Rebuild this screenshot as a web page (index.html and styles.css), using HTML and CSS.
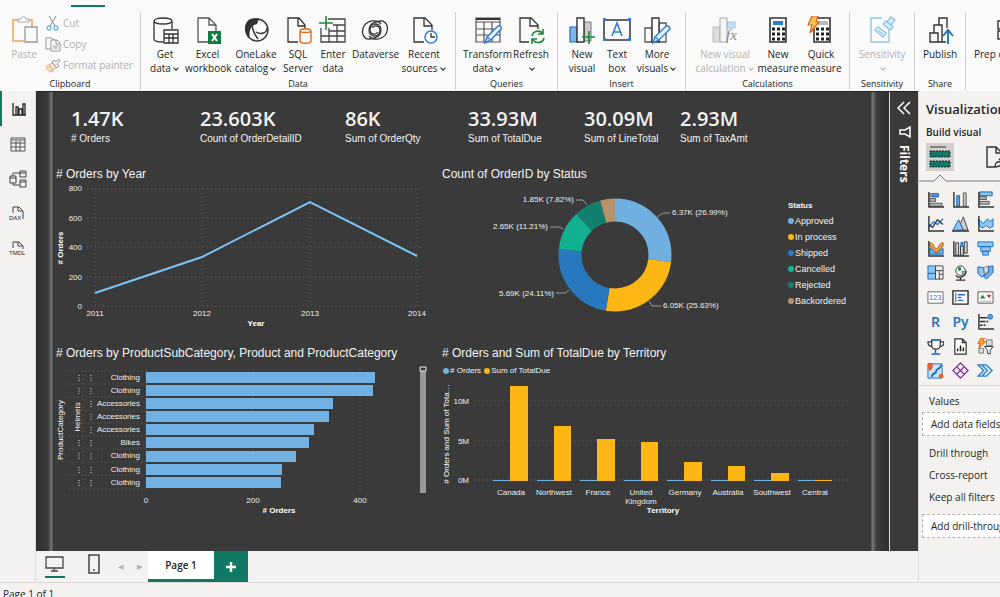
FILE: index.html
```html
<!DOCTYPE html>
<html lang="en">
<head>
    <meta charset="UTF-8">
    <meta name="viewport" content="width=device-width, initial-scale=1.0">
    <title>Orders report</title>
    <link rel="stylesheet" href="styles.css">
</head>
<body>
    <header class="ribbon">
        <div class="tab-strip"><span class="tab-line"></span></div>
        <div class="groups">
            <section class="group clipboard">
                <div class="tools">
                    <button class="tool off">
                        <svg class="icon" viewBox="0 0 28 28"><path d="M10 4H3v21h11" fill="none" stroke="#f0b878" stroke-width="2"/><path d="M18 4h4v7" fill="none" stroke="#f0b878" stroke-width="2"/><path d="M8 6V3h3c0-3 5-3 5 0h3v3z" fill="#fff" stroke="#aaa"/><path d="M15 11h12v15H15z" fill="#fafafa" stroke="#999" stroke-width="1.3"/></svg>
                        Paste
                    </button>
                    <div class="small-tools">
                        <button class="small-tool"><svg viewBox="0 0 16 16"><path d="M4 1l6 10M11 1L5 11" stroke="#888" fill="none"/><g fill="none" stroke="#6fb3e0" stroke-width="1.3"><circle cx="4" cy="13" r="2"/><circle cx="11" cy="13" r="2"/></g></svg>Cut</button>
                        <button class="small-tool"><svg viewBox="0 0 16 16"><path d="M6 13H1V2h6l2 2M6 4h6l3 3v8H6zM11 4v4h4M8 10h5M8 12h5" fill="none" stroke="#999"/></svg>Copy</button>
                        <button class="small-tool"><svg viewBox="0 0 16 16"><path d="M2 9l5-3 4 4-4 5c-2 0-5-2-6-5z" fill="#fbe3c8" stroke="#eda862"/><path d="M7 5l2-2 2 2 3-3 1 2-3 3 2 2-2 2zM4 11l2-2M6 13l2-2" fill="none" stroke="#999"/></svg>Format painter</button>
                    </div>
                </div>
                <h2>Clipboard</h2>
            </section>
            <section class="group data">
                <div class="tools">
                    <button class="tool">
                        <svg class="icon" viewBox="0 0 28 28"><g fill="none" stroke="#333" stroke-width="1.3"><path d="M12 26c-5 0-9-1-9-3V5c0-4 18-4 18 0v8M3 5c0 4 18 4 18 0"/><path d="M13 14h14v13H13zM13 18h14M13 22h14M18 18v9M22 18v9" fill="#fff"/></g></svg>
                        Get<br>data<i class="caret"></i>
                    </button>
                    <button class="tool">
                        <svg class="icon" viewBox="0 0 28 28"><path d="M14 26H4V2h11l7 7v6M15 2v7h7" fill="none" stroke="#555" stroke-width="1.3"/><path d="M14 15h13v13H14z" fill="#107c41"/><path d="M18 18l5 7M23 18l-5 7" stroke="#fff" stroke-width="2"/></svg>
                        Excel<br>workbook
                    </button>
                    <button class="tool">
                        <svg class="icon" viewBox="0 0 28 28"><path d="M17 3C8 0 3 6 3 12c0 5 2 8 5 10C6 14 10 9 15 8z" fill="#333"/><g fill="none" stroke="#333" stroke-width="1.4"><circle cx="15" cy="14" r="11"/><path d="M10 8c0 7 3 11 6 15M25 12c0 5-6 7-11 4"/></g></svg>
                        OneLake<br>catalog<i class="caret"></i>
                    </button>
                    <button class="tool">
                        <svg class="icon" viewBox="0 0 28 28"><path d="M14 26H4V2h11l6 7v4M14 2v8h7" fill="none" stroke="#333" stroke-width="1.3"/><path d="M16 15c0-3 11-3 11 0v10c0 3-11 3-11 0zM16 15c0 2 11 2 11 0" fill="#fafafa" stroke="#e06a1b" stroke-width="1.4"/></svg>
                        SQL<br>Server
                    </button>
                    <button class="tool">
                        <svg class="icon" viewBox="0 0 28 28"><path d="M9 3h17v23H2V12M14 9h12M10 15h16M2 20h24M10 12v14M18 9v17" fill="none" stroke="#444" stroke-width="1.3"/><path d="M7 0v14M0 7h14" stroke="#1e8a3c" stroke-width="1.6"/></svg>
                        Enter<br>data
                    </button>
                    <button class="tool">
                        <svg class="icon" viewBox="0 0 28 28"><g fill="none" stroke="#333" stroke-width="1.3"><path d="M20 8C16 3 7 4 3 10c-4 8 1 14 6 13 8-1 11-5 11-9 0-8-11-8-11 0 0 5 6 5 8 2"/><path d="M8 20c4 5 13 4 17-2 4-8-1-14-6-13-8 1-11 5-11 9 0 8 11 8 11 0 0-5-6-5-8-2"/></g></svg>
                        Dataverse
                    </button>
                    <button class="tool">
                        <svg class="icon" viewBox="0 0 28 28"><path d="M14 26H4V2h11l7 7v5M14 2v8h8" fill="none" stroke="#333" stroke-width="1.3"/><circle cx="21" cy="21" r="6" fill="#fff" stroke="#2b7cd3" stroke-width="1.5"/><path d="M21 17v4h4" fill="none" stroke="#333" stroke-width="1.3"/></svg>
                        Recent<br>sources<i class="caret"></i>
                    </button>
                </div>
                <h2>Data</h2>
            </section>
            <section class="group queries">
                <div class="tools">
                    <button class="tool">
                        <svg class="icon" viewBox="0 0 28 28"><path d="M2 2h24v24H2zM2 6h24M2 13h24M2 19h24M10 6v20M18 6v20" fill="none" stroke="#555" stroke-width="1.2"/><path d="M2 3h24" stroke="#333" stroke-width="2"/><path d="M11 27l2-6 11-11c2-1 4 1 3 3L17 24zM13 21l4 3" fill="#e4f1fc" stroke="#2b7cd3" stroke-width="1.4"/></svg>
                        Transform<br>data<i class="caret"></i>
                    </button>
                    <button class="tool">
                        <svg class="icon" viewBox="0 0 28 28"><path d="M12 26H3V2h11l7 7v4M13 2v8h8" fill="none" stroke="#333" stroke-width="1.3"/><path d="M15 20c1-5 8-7 11-2M26 13v5h-5M27 22c-1 5-8 6-11 2M15 28v-5h5" fill="none" stroke="#1e8a3c" stroke-width="1.6"/></svg>
                        Refresh<br><i class="caret"></i>
                    </button>
                </div>
                <h2>Queries</h2>
            </section>
            <section class="group insert">
                <div class="tools">
                    <button class="tool">
                        <svg class="icon" viewBox="0 0 28 28"><path d="M16 6h7v19h-7z" fill="#ccc" stroke="#777"/><path d="M2 11h7v15H2z" fill="#7ab8f0" stroke="#2b6cb0" stroke-width="1.2"/><path d="M9 2h7v24H9z" fill="#fff" stroke="#333" stroke-width="1.4"/><path d="M21 15v13M14 21h13" stroke="#1e8a3c" stroke-width="1.7"/></svg>
                        New<br>visual
                    </button>
                    <button class="tool">
                        <svg class="icon" viewBox="0 0 28 28"><path d="M1 4h26v20H1z" fill="none" stroke="#333" stroke-width="1.5"/><path d="M0 2h3v3H0zM25 2h3v3h-3zM0 22h3v3H0zM25 22h3v3h-3z" fill="#2b7cd3"/><path d="M9 20l5-13 5 13M11 16h6" fill="none" stroke="#2b7cd3" stroke-width="1.6"/></svg>
                        Text<br>box
                    </button>
                    <button class="tool">
                        <svg class="icon" viewBox="0 0 28 28"><path d="M2 12h7v14H2zM16 7h7v19h-7z" fill="none" stroke="#555" stroke-width="1.3"/><path d="M9 2h7v24H9z" fill="#fff" stroke="#333" stroke-width="1.4"/><path d="M10 27l2-6 11-11c2-1 4 1 4 3L16 24zM12 21l4 3" fill="#e4f1fc" stroke="#2b7cd3" stroke-width="1.4"/></svg>
                        More<br>visuals<i class="caret"></i>
                    </button>
                </div>
                <h2>Insert</h2>
            </section>
            <section class="group calculations">
                <div class="tools">
                    <button class="tool off">
                        <svg class="icon" viewBox="0 0 28 28"><path d="M16 6h8v6h-8z" fill="#c5dff5" stroke="#9cc7ea"/><path d="M2 11h7v15H2z" fill="#ddd" stroke="#bbb"/><path d="M9 2h7v24H9z" fill="#f5f5f5" stroke="#aaa"/><text x="15" y="24" class="fx">fx</text></svg>
                        New visual<br>calculation<i class="caret"></i>
                    </button>
                    <button class="tool">
                        <svg class="icon" viewBox="0 0 28 28"><path d="M6 2h16v24H6z" fill="#fff" stroke="#333" stroke-width="1.6"/><path d="M9 5h10v4H9z" fill="#2b7cd3"/><path d="M8 13h13M8 18h13M8 23h13" stroke="#222" stroke-width="3" stroke-dasharray="3 2"/></svg>
                        New<br>measure
                    </button>
                    <button class="tool">
                        <svg class="icon" viewBox="0 0 28 28"><path d="M7 2h16v24H7z" fill="#fff" stroke="#333" stroke-width="1.6"/><path d="M11 5h10v4H11z" fill="#bbb"/><path d="M9 13h13M9 18h13M9 23h13" stroke="#222" stroke-width="3" stroke-dasharray="3 2"/><path d="M5 0h6l-2 6h3L3 17l2-8H1z" fill="#f9c557" stroke="#d9601a" stroke-width="1.2"/></svg>
                        Quick<br>measure
                    </button>
                </div>
                <h2>Calculations</h2>
            </section>
            <section class="group sensitivity">
                <div class="tools">
                    <button class="tool off">
                        <svg class="icon" viewBox="0 0 28 28"><g fill="none" stroke="#8ec5e8" stroke-width="1.4"><path d="M14 2H3v24h18V14"/><path d="M7 14l3-3 8 6-3 4zM10 14l5 4"/><path d="M15 8l3-3 7 6-3 3zM19 6l4-5 4 3-4 5" fill="#d7ebf8"/></g></svg>
                        Sensitivity<br><i class="caret"></i>
                    </button>
                </div>
                <h2>Sensitivity</h2>
            </section>
            <section class="group share">
                <div class="tools">
                    <button class="tool">
                        <svg class="icon" viewBox="0 0 28 28"><path d="M4 17h8v9H4zM8 17V9h8v17h-4M13 9V2h8v10M16 26h4" fill="none" stroke="#333" stroke-width="1.4"/><path d="M22 28V15M17 20l5-6 5 6" fill="none" stroke="#1a6fb8" stroke-width="1.8"/></svg>
                        Publish
                    </button>
                </div>
                <h2>Share</h2>
            </section>
            <section class="group prep">
                <div class="tools">
                    <button class="tool">
                        <svg class="icon" viewBox="0 0 28 28"><path d="M1 5h9v8H1zM1 15h9v8H1zM13 5h9v18h-9z" fill="none" stroke="#333" stroke-width="1.4"/><path d="M4 8h4v3H4z" fill="#333"/></svg>
                        Prep data for AI
                    </button>
                </div>
            </section>
        </div>
    </header>

    <div class="workspace">
        <nav class="rail">
            <button class="rail-item active" aria-label="Report view"><svg viewBox="0 0 18 18"><path d="M3 3v12h13M6 15V7h2v8M9 15V9h3v6M13 15V4h2v11" fill="none" stroke="#222" stroke-width="1.3"/></svg></button>
            <button class="rail-item" aria-label="Table view"><svg viewBox="0 0 18 18"><path d="M2 3h14v13H2zM2 8h14M2 12h14M7 6v10M11 6v10M2 5h14" fill="none" stroke="#555"/></svg></button>
            <button class="rail-item" aria-label="Model view"><svg viewBox="0 0 18 18"><path d="M1 6h6v7H1zM11 1h6v6h-6zM11 10h6v7h-6zM1 8h6M11 3h6M11 12h6M4 6V3h7M4 13v2h7" fill="none" stroke="#444"/></svg></button>
            <button class="rail-item" aria-label="DAX query view"><svg viewBox="0 0 18 18"><path d="M4 8V2h6l4 4v8M9 2v4h5" fill="none" stroke="#444"/><text x="0" y="15">DAX</text></svg></button>
            <button class="rail-item" aria-label="TMDL view"><svg viewBox="0 0 18 18"><path d="M4 8V2h6l4 4v3M9 2v4h5" fill="none" stroke="#444"/><text x="0" y="15">TMDL</text></svg></button>
        </nav>

        <div class="center">
            <div class="stage">
                <main class="sheet">
                    <div class="kpis">
                        <div><strong>1.47K</strong><span># Orders</span></div>
                        <div><strong>23.603K</strong><span>Count of OrderDetailID</span></div>
                        <div><strong>86K</strong><span>Sum of OrderQty</span></div>
                        <div><strong>33.93M</strong><span>Sum of TotalDue</span></div>
                        <div><strong>30.09M</strong><span>Sum of LineTotal</span></div>
                        <div><strong>2.93M</strong><span>Sum of TaxAmt</span></div>
                    </div>

                    <div class="charts">
                        <section class="card">
                            <h2># Orders by Year</h2>
                            <svg class="chart" viewBox="0 0 386 148">
                                <path class="grid" d="M33 7h334M33 36h334M33 65h334M33 95h334M33 124h334M41 7v117M148 7v117M256 7v117M363 7v117"/>
                                <path d="M41 111L148 75L256 20L363 74" fill="none" stroke="#7cc4f4" stroke-width="2"/>
                                <g class="end"><text x="28" y="9">800</text><text x="28" y="39">600</text><text x="28" y="68">400</text><text x="28" y="98">200</text><text x="28" y="127">0</text></g>
                                <g class="mid"><text x="41" y="134">2011</text><text x="148" y="134">2012</text><text x="256" y="134">2013</text><text x="363" y="134">2014</text></g>
                                <text class="mid axis" x="202" y="144">Year</text>
                                <text class="mid axis" transform="translate(9 66) rotate(-90)"># Orders</text>
                            </svg>
                        </section>

                        <section class="card">
                            <h2>Count of OrderID by Status</h2>
                            <div class="with-legend">
                                <svg class="chart" viewBox="0 0 345 148">
                                    <g transform="translate(175 73) rotate(-90)" fill="none" stroke-width="23">
                                        <circle r="45" pathLength="10000" stroke="#70b0e0" stroke-dasharray="2699 7301"/>
                                        <circle r="45" pathLength="10000" stroke="#fdb714" stroke-dasharray="2563 7437" stroke-dashoffset="-2699"/>
                                        <circle r="45" pathLength="10000" stroke="#2878bd" stroke-dasharray="2411 7589" stroke-dashoffset="-5262"/>
                                        <circle r="45" pathLength="10000" stroke="#10b090" stroke-dasharray="1121 8879" stroke-dashoffset="-7673"/>
                                        <circle r="45" pathLength="10000" stroke="#128070" stroke-dasharray="782 9218" stroke-dashoffset="-8794"/>
                                        <circle r="45" pathLength="10000" stroke="#b5936b" stroke-dasharray="424 9576" stroke-dashoffset="-9576"/>
                                    </g>
                                    <path d="M217 35l6-4h7M209 119l3 5h9M116 111h9l4-3M110 45h9l4 2M136 18h7l4 5" fill="none" stroke="#999"/>
                                    <text x="232" y="33">6.37K (26.99%)</text>
                                    <text x="223" y="126">6.05K (25.63%)</text>
                                    <g class="end"><text x="114" y="114">5.69K (24.11%)</text><text x="108" y="47">2.65K (11.21%)</text><text x="134" y="20">1.85K (7.82%)</text></g>
                                </svg>
                                <div class="legend">
                                    <h3>Status</h3>
                                    <ul>
                                        <li><i class="dot sky"></i>Approved</li>
                                        <li><i class="dot amber"></i>In process</li>
                                        <li><i class="dot blue"></i>Shipped</li>
                                        <li><i class="dot mint"></i>Cancelled</li>
                                        <li><i class="dot teal"></i>Rejected</li>
                                        <li><i class="dot tan"></i>Backordered</li>
                                    </ul>
                                </div>
                            </div>
                        </section>

                        <section class="card">
                            <h2># Orders by ProductSubCategory, Product and ProductCategory</h2>
                            <svg class="chart" viewBox="0 0 386 160">
                                <path class="grid" d="M15 10h77M15 23h77M15 36h77M15 49h77M15 62h77M15 75h77M15 88h77M15 101h77M15 114h77M15 128h77M199 8v122M306 8v122M29 10v118M92 10v118"/>
                                <path d="M25 14v6M25 27v6M25 79v6M25 92v6M25 106v6M25 119v6M37 14v6M37 27v6M37 40v6M37 53v6M37 66v6M37 79v6M37 92v6M37 106v6M37 119v6" stroke="#ddd" stroke-dasharray="1 1.5"/>
                                <g fill="#70b0e2">
                                    <rect x="92" y="11" width="229" height="11"/><rect x="92" y="24" width="227" height="11"/><rect x="92" y="37" width="187" height="11"/>
                                    <rect x="92" y="50" width="183" height="11"/><rect x="92" y="63" width="168" height="11"/><rect x="92" y="76" width="163" height="11"/>
                                    <rect x="92" y="90" width="150" height="11"/><rect x="92" y="103" width="136" height="11"/><rect x="92" y="116" width="135" height="11"/>
                                </g>
                                <g class="end">
                                    <text x="86" y="19">Clothing</text><text x="86" y="32">Clothing</text><text x="86" y="45">Accessories</text>
                                    <text x="86" y="58">Accessories</text><text x="86" y="71">Accessories</text><text x="86" y="84">Bikes</text>
                                    <text x="86" y="97">Clothing</text><text x="86" y="111">Clothing</text><text x="86" y="124">Clothing</text>
                                </g>
                                <g class="mid"><text x="92" y="142">0</text><text x="199" y="142">200</text><text x="306" y="142">400</text></g>
                                <text class="mid axis" x="225" y="152"># Orders</text>
                                <text class="mid" transform="translate(26 56) rotate(-90)">Helmets</text>
                                <text class="mid axis thin" transform="translate(9 69) rotate(-90)">ProductCategory</text>
                                <rect x="366" y="6" width="6" height="126" fill="#999"/>
                                <path d="M366 6h6v4h-6z" fill="#3a3a3a" stroke="#eee"/>
                            </svg>
                        </section>

                        <section class="card">
                            <h2># Orders and Sum of TotalDue by Territory</h2>
                            <ul class="legend inline">
                                <li><i class="dot sky"></i># Orders</li>
                                <li><i class="dot amber"></i>Sum of TotalDue</li>
                            </ul>
                            <svg class="chart" viewBox="0 0 431 140">
                                <path class="grid" d="M35 20h375M35 60h375M35 99h375"/>
                                <g fill="#fdb714">
                                    <rect x="70" y="5" width="18" height="95"/><rect x="114" y="45" width="17" height="55"/><rect x="157" y="58" width="18" height="42"/><rect x="201" y="61" width="17" height="39"/>
                                    <rect x="244" y="81" width="18" height="19"/><rect x="288" y="85" width="17" height="15"/><rect x="331" y="92" width="18" height="8"/><rect x="375" y="99" width="17" height="1"/>
                                </g>
                                <g fill="#70b0e2">
                                    <rect x="53" y="99" width="17" height="1"/><rect x="97" y="99" width="17" height="1"/><rect x="140" y="99" width="17" height="1"/><rect x="184" y="99" width="17" height="1"/>
                                    <rect x="227" y="99" width="17" height="1"/><rect x="271" y="99" width="17" height="1"/><rect x="314" y="99" width="17" height="1"/><rect x="358" y="99" width="17" height="1"/>
                                </g>
                                <g class="end"><text x="29" y="23">10M</text><text x="29" y="63">5M</text><text x="29" y="102">0M</text></g>
                                <g class="mid">
                                    <text x="71" y="114">Canada</text><text x="114" y="114">Northwest</text><text x="158" y="114">France</text><text x="201" y="114">United</text><text x="201" y="123">Kingdom</text>
                                    <text x="245" y="114">Germany</text><text x="288" y="114">Australia</text><text x="332" y="114">Southwest</text><text x="375" y="114">Central</text>
                                </g>
                                <text class="mid axis" x="223" y="132">Territory</text>
                                <text class="mid axis thin" transform="translate(9 53) rotate(-90)"># Orders and Sum of Tota…</text>
                            </svg>
                        </section>
                    </div>
                </main>
                <aside class="filters">
                    <button aria-label="Expand filters"><svg viewBox="0 0 14 14"><path d="M7 1L1 7l6 6M13 1L7 7l6 6" fill="none" stroke="#fff" stroke-width="1.5"/></svg></button>
                    <svg class="funnel" viewBox="0 0 14 14"><path d="M13 2v10L8 9H3V5h5z" fill="none" stroke="#fff" stroke-width="1.500"/></svg>
                    <h2>Filters</h2>
                </aside>
            </div>
            <footer class="pages">
                <button class="device current" aria-label="Desktop layout"><svg viewBox="0 0 20 20"><path d="M1 3h17v11H1zM9 14v3M6 17h7" fill="none" stroke="#444" stroke-width="1.3"/></svg></button>
                <button class="device" aria-label="Mobile layout"><svg viewBox="0 0 20 20"><path d="M5 1h10v18H5zM9 16h2" fill="none" stroke="#444" stroke-width="1.5"/></svg></button>
                <button class="step" aria-label="Previous page">◀</button>
                <button class="step" aria-label="Next page">▶</button>
                <button class="page-tab">Page 1</button>
                <button class="add-page" aria-label="New page"><svg viewBox="0 0 12 12"><path d="M6 1v10M1 6h10" stroke="#fff" stroke-width="2.4"/></svg></button>
            </footer>
        </div>

        <aside class="viz">
            <h1>Visualizations</h1>
            <h2>Build visual</h2>
            <div class="modes">
                <button class="mode on" aria-label="Build visual"><svg viewBox="0 0 28 28"><path d="M4 4h16" stroke="#333"/><path d="M4 8h20v6H4zM4 18h20v6H4z" fill="#117865" stroke="#222" stroke-dasharray="2 1"/></svg></button>
                <button class="mode" aria-label="Format visual"><svg viewBox="0 0 28 28"><path d="M9 24H1V4h9l6 6v4M10 4v6h6M13 17c3-4 8-4 9-8M9 24c0-4 2-6 5-5s1 5-5 5" fill="none" stroke="#333" stroke-width="1.4"/></svg></button>
            </div>
            <svg class="notch" viewBox="0 0 82 9"><path d="M0 8H15L21 2L27 8H82" fill="none" stroke="#777"/></svg>
            <div class="gallery">
                <button aria-label="Stacked bar"><svg viewBox="0 0 18 18"><path d="M3 3h9v3H3zM3 8h6v3H3zM3 13h13v3H3z" fill="#bbb" stroke="#555"/><path d="M6 3h6v3H6z" fill="#5aa9e6" stroke="#1a5fb4"/><path d="M2 1v16h16" class="ax"/></svg></button>
                <button aria-label="Stacked column"><svg viewBox="0 0 18 18"><path d="M5 5h3v11H5z" fill="#5aa9e6" stroke="#1a5fb4"/><path d="M12 2h3v14h-3z" fill="#ccc" stroke="#555"/><path d="M2 1v16h16" class="ax"/></svg></button>
                <button aria-label="Clustered bar"><svg viewBox="0 0 18 18"><path d="M3 1h13v4H3z" fill="#8cc5f2" stroke="#1a5fb4"/><path d="M3 6h7v3H3zM3 11h10v3H3z" fill="#bbb" stroke="#555"/><path d="M2 1v16h16" class="ax"/></svg></button>
                <button aria-label="Line"><svg viewBox="0 0 18 18"><path d="M2 13l5-6 4 3 6-6" class="bl"/><path d="M2 10l4 3 5-8 6 5" fill="none" stroke="#333" stroke-width="1.3"/><path d="M2 1v16h16" class="ax"/></svg></button>
                <button aria-label="Area"><svg viewBox="0 0 18 18"><path d="M6 16l6-14 5 14z" fill="#ccc" stroke="#444"/><path d="M1 16l6-11 5 11z" fill="#8cc5f2" stroke="#1a5fb4"/><path d="M0 17h18" class="ax"/></svg></button>
                <button aria-label="Stacked area"><svg viewBox="0 0 18 18"><path d="M2 5l5 4 4-5 3 3 3-3v8l-4 2-3-3-4 3-4-3z" fill="#8cc5f2" stroke="#1a6fc4"/><path d="M2 1v16h16" class="ax"/></svg></button>
                <button aria-label="Ribbon"><svg viewBox="0 0 18 18"><path d="M3 3c5 0 4 6 7 6s2-6 7-6v4c-4 0-4 6-7 6S7 7 3 7z" fill="#f4a64a" stroke="#a55a10"/><path d="M3 9c4 0 4 5 7 5s3-5 7-5v6H3z" fill="#6cb3ea" stroke="#1a5fb4"/><path d="M2 1v16h16" class="ax"/></svg></button>
                <button aria-label="Waterfall"><svg viewBox="0 0 18 18"><path d="M4 3h3v13H4zM9 6h3v10H9zM13 2h3v12h-3z" fill="#ddd" stroke="#333"/><path d="M9 2h3v5H9z" fill="#2b7cd3"/><path d="M2 1v16h16" class="ax"/></svg></button>
                <button aria-label="Funnel"><svg viewBox="0 0 18 18"><path d="M1 2h16v5H1zM4 7h10v5H4zM6 12h6v4H6z" fill="#8cc5f2" stroke="#1a6fc4"/></svg></button>
                <button aria-label="Treemap"><svg viewBox="0 0 18 18"><path d="M1 2h8v8H1zM1 10h8v6H1z" fill="#8cc5f2" stroke="#1a6fc4"/><path d="M9 2h8v14H9zM9 7h8M13 7v9M13 11h4" fill="#eee" stroke="#444"/></svg></button>
                <button aria-label="Map"><svg viewBox="0 0 18 18"><circle cx="9" cy="7" r="5" fill="#fff" stroke="#333"/><path d="M6 4l3-1 1 3-3 2zM10 8l3-1-2 4z" fill="#1e8a3c"/><path d="M4 12c3 4 11 2 11-5M9 14v3M4 17h10" fill="none" stroke="#333" stroke-width="1.4"/></svg></button>
                <button aria-label="Filled map"><svg viewBox="0 0 18 18"><path d="M1 3l6 1 1 7-3 3-4-4z" fill="#8cc5f2" stroke="#1a5fb4"/><path d="M7 4l5-2 1 5-5 4z" fill="#ddd" stroke="#777"/><path d="M12 3l5-1v7l-7 7-3-3 5-4z" fill="#6cb3ea" stroke="#1a5fb4"/></svg></button>
                <button aria-label="Card"><svg viewBox="0 0 18 18"><path d="M1 3h16v12H1z" fill="#fff" stroke="#666"/><text x="2" y="12" class="num">123</text></svg></button>
                <button aria-label="Multi-row card"><svg viewBox="0 0 18 18"><path d="M1 2h16v14H1z" fill="#fff" stroke="#222" stroke-width="1.4"/><path d="M4 4v10" stroke="#444"/><path d="M6 6h8M6 9h4M6 12h6" stroke="#2b6cd3" stroke-width="1.5"/></svg></button>
                <button aria-label="KPI"><svg viewBox="0 0 18 18"><path d="M1 3h16v12H1z" fill="#fff" stroke="#555"/><path d="M3 10l3-4 3 4z" fill="#1e8a3c"/><path d="M10 6h5l-2 4z" fill="#d13438"/><path d="M3 13h12" stroke="#aaa"/></svg></button>
                <button class="letters" aria-label="R script">R</button>
                <button class="letters" aria-label="Python script">Py</button>
                <button aria-label="Key influencers"><svg viewBox="0 0 18 18"><path d="M2 1v16h16M3 5h8M3 9h6M3 13h3" class="ax"/><circle cx="14" cy="4" r="2.5" fill="#5aa9e6" stroke="#1a5fb4"/><circle cx="11" cy="9" r="1" fill="#333"/><circle cx="8" cy="13" r="1" fill="#333"/></svg></button>
                <button aria-label="Goals"><svg viewBox="0 0 18 18"><path d="M5 2h9v6c0 5-9 5-9 0zM5 4H1c0 4 2 5 4 5M14 4h4c0 4-2 5-4 5" fill="#fff" stroke="#333" stroke-width="1.3"/><path d="M5 2h9" stroke="#2b7cd3" stroke-width="2"/><path d="M9 12v4M5 17h9" stroke="#1a5fb4" stroke-width="1.5"/></svg></button>
                <button aria-label="Paginated report"><svg viewBox="0 0 18 18"><path d="M3 1h8l4 4v12H3zM11 1v4h4" fill="#fff" stroke="#333" stroke-width="1.3"/><path d="M6 14v-3M9 14V8M12 14v-4" stroke="#222" stroke-width="1.6"/></svg></button>
                <button aria-label="Power Apps"><svg viewBox="0 0 18 18"><path d="M10 2h6v6h-6zM2 11h5v5H2z" fill="#ddd" stroke="#777"/><path d="M4 0h4L6 4h3L2 11l1-5H1z" fill="#f9a13a" stroke="#d9601a"/><path d="M8 9h9l-3 4v4l-3-1v-3z" fill="#fff" stroke="#333"/></svg></button>
                <button aria-label="Azure map"><svg viewBox="0 0 18 18"><path d="M1 2h15v15H1z" fill="#c9e4f8" stroke="#1a6fc4"/><path d="M5 16c0-5 5-3 5-7 0-2 4-1 5-6" fill="none" stroke="#1a6fc4" stroke-width="2"/><path d="M1 1h5v5L3 10 1 6z" fill="#e0622a"/><circle cx="15" cy="15" r="2.5" fill="#e0622a"/></svg></button>
                <button aria-label="Power Apps visual"><svg viewBox="0 0 18 18"><path d="M9 1l8 8-8 8-8-8zM5 5l8 8M13 5l-8 8" fill="#fff" stroke="#8a2da5" stroke-width="1.4"/></svg></button>
                <button aria-label="Power Automate"><svg viewBox="0 0 18 18"><path d="M1 3h9l6 6-6 6H1l6-6zM5 3l6 6-6 6" fill="#d9ecfb" stroke="#2b7cd3" stroke-width="1.4"/></svg></button>
            </div>
            <div class="wells">
                <h3>Values</h3>
                <div class="well">Add data fields here</div>
                <h3>Drill through</h3>
                <p>Cross-report</p>
                <p>Keep all filters</p>
                <div class="well last">Add drill-through fields here</div>
            </div>
        </aside>
    </div>
    <div class="status">Page 1 of 1</div>
</body>
</html>
```
FILE: styles.css
```css
* {
    box-sizing: border-box;
}
body {
    margin: 0;
    height: 100vh;
    display: flex;
    flex-direction: column;
    overflow: hidden;
    font-family: "Open Sans", "Noto Sans", sans-serif;
    font-size: 10px;
    color: #252423;
    background: #f3f2f1;
}
h1, h2, h3, p, ul {
    margin: 0;
    padding: 0;
    list-style: none;
}
button {
    font: inherit;
    color: inherit;
    background: none;
    border: 0;
    padding: 0;
    cursor: pointer;
}
svg {
    display: block;
}

/* Ribbon */
.ribbon {
    flex: none;
    background: #fafafa;
    overflow: hidden;
    padding-bottom: 1px;
}
.tab-strip {
    height: 12px;
    padding: 5px 0 0 71px;
}
.tab-line {
    display: block;
    width: 34px;
    height: 2px;
    background: #117865;
}
.groups {
    display: flex;
    height: 78px;
}
.group {
    flex: none;
    display: flex;
    flex-direction: column;
    justify-content: space-between;
    border-right: 1px solid #d2d0ce;
}
.group h2 {
    font-size: 9px;
    font-weight: 400;
    line-height: 12px;
    text-align: center;
}
.tools {
    display: grid;
    align-items: start;
}
.tool {
    line-height: 14px;
    padding-top: 4px;
    white-space: nowrap;
    display: flow-root;
    text-align: center;
}
.icon {
    width: 28px;
    height: 28px;
    margin: 0 auto 3px;
}
.off {
    color: #b3b0ad;
}
.caret {
    display: inline-block;
    width: 4px;
    height: 4px;
    margin: 0 2px 2px 3px;
    border: solid currentColor;
    border-width: 0 1px 1px 0;
    transform: rotate(45deg);
}
.fx {
    font: italic 15px "Liberation Serif", serif;
    fill: #888;
}
.clipboard { width: 141px; }
.clipboard .tools { grid-template-columns: 36px 1fr; padding-left: 6px; }
.data { width: 315px; }
.data .tools { grid-template-columns: 40px 45px 52px 32px 38px 46px 52px; padding-left: 4px; }
.queries { width: 102px; }
.queries .tools { grid-template-columns: 51px 36px; padding-left: 6px; }
.insert { width: 128px; }
.insert .tools { grid-template-columns: 34px 36px 44px; padding-left: 7px; }
.calculations { width: 164px; }
.calculations .tools { grid-template-columns: 62px 44px 42px; padding-left: 8px; }
.sensitivity { width: 65px; }
.share { width: 51px; }
.prep { border: 0; padding-left: 8px; }
.small-tools {
    display: flex;
    flex-direction: column;
    padding-left: 3px;
}
.small-tool {
    display: flex;
    align-items: center;
    gap: 2px;
    height: 21px;
    color: #b3b0ad;
    white-space: nowrap;
}
.small-tool svg {
    width: 16px;
    height: 16px;
}

/* Workspace */
.workspace {
    flex: 1;
    min-height: 0;
    display: flex;
}
.rail {
    flex: 0 0 36px;
    border-right: 1px solid #dddbd9;
}
.rail-item {
    display: grid;
    place-items: center;
    width: 100%;
    height: 35px;
}
.rail-item svg {
    width: 18px;
    height: 18px;
}
.rail-item text {
    font: 6px "Liberation Sans", sans-serif;
    fill: #222;
}
.rail-item.active {
    border-left: 2px solid #117865;
}
.center {
    flex: 1;
    min-width: 0;
    display: flex;
    flex-direction: column;
}
.stage {
    flex: 1;
    min-height: 0;
    display: flex;
    background: #3a3a3a;
    border-top: 1px solid #222;
}
.sheet {
    flex: 1;
    min-width: 0;
    overflow: hidden;
    padding: 0 18px 0 18px;
    background:
        linear-gradient(90deg, #2d2d2d, #3c3c3c 12px, #7a7a7a 16px, transparent 17px) left / 20px 100% no-repeat,
        linear-gradient(270deg, #2d2d2d, #3c3c3c 12px, #7a7a7a 17px, transparent 18px) right / 20px 100% no-repeat,
        #3a3a3a;
    font-family: "Liberation Sans", Arial, sans-serif;
    color: #f3f3f3;
}
.kpis {
    display: grid;
    grid-template-columns: 129fr 145fr 123fr 116fr 96fr 191fr;
    height: 74px;
    padding: 14px 0 0 17px;
    white-space: nowrap;
}
.kpis strong {
    display: block;
    font: 600 20px/26px "Open Sans", "Noto Sans", sans-serif;
}
.kpis span {
    display: block;
    font-size: 10px;
    line-height: 14px;
}
.charts {
    display: grid;
    grid-template-columns: 386fr 431fr;
    row-gap: 15px;
}
.card {
    min-width: 0;
}
.card h2 {
    font-size: 12px;
    font-weight: 400;
    line-height: 16px;
    padding-left: 2px;
    white-space: nowrap;
}
.chart {
    width: 100%;
    height: auto;
}
.chart text {
    font-size: 8px;
    fill: #eee;
}
.chart .axis {
    font-weight: 700;
    fill: #fff;
}
.chart .thin {
    font-weight: 400;
}
.mid { text-anchor: middle; }
.end { text-anchor: end; }
.grid {
    fill: none;
    stroke: #5c5c5c;
    stroke-dasharray: 1 3;
}
.with-legend {
    display: grid;
    grid-template-columns: 345fr 86fr;
}
.legend {
    font-size: 9px;
    line-height: 16px;
    padding: 17px 0 0 3px;
    white-space: nowrap;
}
.legend h3 {
    font-size: 8px;
    line-height: 14px;
}
.legend li {
    display: flex;
    align-items: center;
    gap: 1px;
}
.legend.inline {
    display: flex;
    gap: 3px;
    font-size: 8px;
    padding: 0 0 0 3px;
    line-height: 20px;
}
.dot {
    width: 6px;
    height: 6px;
    border-radius: 50%;
}
.sky { background: #70b0e2; }
.amber { background: #fdb714; }
.blue { background: #2878cd; }
.mint { background: #10b898; }
.teal { background: #128070; }
.tan { background: #b5936b; }

/* Collapsed filter pane */
.filters {
    flex: 0 0 29px;
    border-left: 1px solid #ddd;
    background: #3a3a3a;
    color: #fff;
    display: flex;
    flex-direction: column;
    align-items: center;
    gap: 10px;
    padding-top: 9px;
}
.filters svg {
    width: 14px;
    height: 14px;
}
.filters h2 {
    writing-mode: vertical-rl;
    font-size: 12px;
    line-height: 16px;
    margin-top: -4px;
}

/* Page tabs */
.pages {
    flex: 0 0 31px;
    display: flex;
    align-items: stretch;
    padding-left: 9px;
}
.device {
    width: 20px;
    margin: 0 7px 4px 0;
    border-bottom: 2px solid transparent;
}
.device.current {
    margin-right: 19px;
    border-color: #117865;
}
.device svg {
    width: 20px;
    height: 20px;
}
.step {
    width: 19px;
    font-size: 7px;
    color: #b3b0ad;
}
.page-tab {
    width: 66px;
    margin-left: -1px;
    background: #fff;
    border-bottom: 3px solid #117865;
    font-weight: 600;
}
.add-page {
    width: 34px;
    background: #117865;
}
.add-page svg {
    width: 12px;
    height: 12px;
    margin: 0 auto;
}

/* Visualizations pane */
.viz {
    flex: 0 0 82px;
    overflow: hidden;
    white-space: nowrap;
    border-left: 1px solid #dddbd9;
}
.viz h1 {
    font-size: 13px;
    font-weight: 600;
    line-height: 20px;
    padding: 8px 0 0 7px;
}
.viz h2 {
    font-size: 10px;
    font-weight: 600;
    line-height: 14px;
    padding: 6px 0 4px 7px;
}
.modes {
    display: flex;
    gap: 32px;
    padding-left: 7px;
}
.mode {
    flex: none;
    width: 28px;
    height: 28px;
}
.mode.on {
    background: #d2d0ce;
}
.notch {
    width: 82px;
    height: 9px;
    margin-top: 2px;
}
.gallery {
    display: grid;
    grid-template-columns: repeat(3, 25px);
    grid-auto-rows: 1fr;
    height: 204px;
    padding: 5px 0 2px 4px;
    border-bottom: 1px solid #dddbd9;
}
.gallery button {
    display: grid;
    place-items: center;
}
.gallery svg {
    width: 17px;
    height: 17px;
}
.ax {
    fill: none;
    stroke: #333;
    stroke-width: 1.5;
}
.bl {
    fill: none;
    stroke: #2b7cd3;
    stroke-width: 1.5;
}
.num {
    font: 8px "Liberation Sans", sans-serif;
    fill: #2b7cd3;
}
.gallery .letters {
    font-size: 14px;
    font-weight: 600;
    color: #1a6fb8;
}
.wells {
    padding: 4px 0 0 3px;
}
.wells h3, .wells p {
    font-size: 10px;
    font-weight: 400;
    line-height: 22px;
    padding-left: 7px;
}
.well {
    width: 160px;
    height: 24px;
    line-height: 23px;
    padding-left: 8px;
    margin-bottom: 6px;
    background: #fff;
    border: 1px dashed #b3b0ad;
}
.well.last {
    margin-top: 6px;
}

.status {
    flex: 0 0 15px;
    overflow: hidden;
    border-top: 1px solid #dddbd9;
    padding: 3px 3px 0;
    line-height: 16px;
}
```
